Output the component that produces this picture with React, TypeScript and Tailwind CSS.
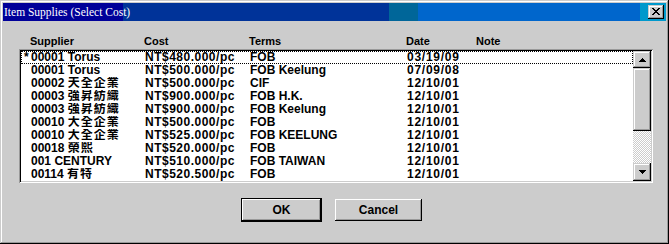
import React from "react";

const raised =
  "shadow-[inset_-1px_-1px_0_#000000,inset_1px_1px_0_#cccccc,inset_-2px_-2px_0_#999999,inset_2px_2px_0_#ffffff]";
const pushBtn =
  "shadow-[inset_-1px_-1px_0_#000000,inset_1px_1px_0_#ffffff,inset_-2px_-2px_0_#999999,inset_2px_2px_0_#cccccc]";

type Row = { mark?: boolean; id: string; name: string; cjk?: boolean; cost: string; terms: string; date: string };

const rows: Row[] = [
  { mark: true, id: "00001", name: "Torus", cost: "NT$480.000/pc", terms: "FOB", date: "03/19/09" },
  { id: "00001", name: "Torus", cost: "NT$500.000/pc", terms: "FOB Keelung", date: "07/09/08" },
  { id: "00002", name: "天全企業", cjk: true, cost: "NT$500.000/pc", terms: "CIF", date: "12/10/01" },
  { id: "00003", name: "強昇紡織", cjk: true, cost: "NT$900.000/pc", terms: "FOB H.K.", date: "12/10/01" },
  { id: "00003", name: "強昇紡織", cjk: true, cost: "NT$900.000/pc", terms: "FOB Keelung", date: "12/10/01" },
  { id: "00010", name: "大全企業", cjk: true, cost: "NT$500.000/pc", terms: "FOB", date: "12/10/01" },
  { id: "00010", name: "大全企業", cjk: true, cost: "NT$525.000/pc", terms: "FOB KEELUNG", date: "12/10/01" },
  { id: "00018", name: "榮熙", cjk: true, cost: "NT$520.000/pc", terms: "FOB", date: "12/10/01" },
  { id: "001", name: "CENTURY", cost: "NT$510.000/pc", terms: "FOB TAIWAN", date: "12/10/01" },
  { id: "00114", name: "有特", cjk: true, cost: "NT$520.500/pc", terms: "FOB", date: "12/10/01" },
];

function ArrowUp() {
  return (
    <svg width="7" height="4" viewBox="0 0 7 4" shapeRendering="crispEdges">
      <rect x="3" y="0" width="1" height="1" fill="#000" />
      <rect x="2" y="1" width="3" height="1" fill="#000" />
      <rect x="1" y="2" width="5" height="1" fill="#000" />
      <rect x="0" y="3" width="7" height="1" fill="#000" />
    </svg>
  );
}

function ArrowDown() {
  return (
    <svg width="7" height="4" viewBox="0 0 7 4" shapeRendering="crispEdges">
      <rect x="0" y="0" width="7" height="1" fill="#000" />
      <rect x="1" y="1" width="5" height="1" fill="#000" />
      <rect x="2" y="2" width="3" height="1" fill="#000" />
      <rect x="3" y="3" width="1" height="1" fill="#000" />
    </svg>
  );
}

function CloseX() {
  const px = [
    "XX....XX",
    ".XX..XX.",
    "..XXXX..",
    "...XX...",
    "..XXXX..",
    ".XX..XX.",
    "XX....XX",
  ];
  return (
    <svg width="8" height="7" viewBox="0 0 8 7" shapeRendering="crispEdges">
      {px.flatMap((r, y) =>
        r.split("").map((c, x) => (c === "X" ? <rect key={`${x}-${y}`} x={x} y={y} width="1" height="1" fill="#000" /> : null))
      )}
    </svg>
  );
}

export default function App() {
  return (
    <div
      className={`w-[669px] h-[244px] bg-[#cccccc] p-[3px] flex flex-col font-['Liberation_Sans','Noto_Sans_CJK_TC',sans-serif] font-bold text-black shadow-[inset_-1px_-1px_0_#000000,inset_1px_1px_0_#cccccc,inset_-2px_-2px_0_#999999,inset_2px_2px_0_#ffffff]`}
    >
      {/* Title bar */}
      <div className="h-[18px] flex items-center justify-between bg-[linear-gradient(to_right,#000099_0px,#000099_120px,#003399_120px,#003399_386px,#006699_386px,#006699_415px,#0066cc_415px,#0066cc_637px,#0099cc_637px)]">
        <span className="pl-[1px] text-white text-[11.5px] font-normal leading-[14px] font-['Liberation_Serif',serif]">
          Item Supplies (Select Cost)
        </span>
        <div className={`mr-[2px] w-[16px] h-[14px] bg-[#cccccc] flex items-center justify-center ${raised}`}>
          <div className="-mt-[1px]">
            <CloseX />
          </div>
        </div>
      </div>

      {/* Column headers */}
      <div className="mt-[14px] ml-[27px] h-[13px] flex text-[11px] leading-[13px]">
        <div className="w-[114px]">Supplier</div>
        <div className="w-[105px]">Cost</div>
        <div className="w-[157px]">Terms</div>
        <div className="w-[70px]">Date</div>
        <div>Note</div>
      </div>

      {/* Listbox */}
      <div className="mt-[1px] ml-[16px] w-[634px] h-[134px] p-[2px] shadow-[inset_1px_1px_0_#999999,inset_-1px_-1px_0_#ffffff,inset_2px_2px_0_#000000,inset_-2px_-2px_0_#cccccc]">
        <div className="w-full h-full bg-white flex">
          <div className="w-[612px] flex flex-col">
            {rows.map((r, i) => (
              <div
                key={i}
                className={`h-[13px] flex items-start text-[12px] leading-[13px] whitespace-nowrap overflow-hidden ${
                  i === 0 ? "outline-1 outline-dotted outline-black -outline-offset-1" : ""
                }`}
              >
                <div className="w-[10px] pl-[3px]">{r.mark ? "*" : ""}</div>
                <div className="w-[114px] flex items-start h-[13px]">
                  <span>{r.id}&nbsp;</span>
                  {r.cjk ? (
                    <span className="inline-block h-[13px] text-[12px] leading-[13px] tracking-[1px]">{r.name}</span>
                  ) : (
                    <span>{r.name}</span>
                  )}
                </div>
                <div className="w-[105px] tracking-[0.5px]">{r.cost}</div>
                <div className="w-[157px]">{r.terms}</div>
                <div className="tracking-[0.75px]">{r.date}</div>
              </div>
            ))}
          </div>
          {/* Scrollbar */}
          <div className="w-[18px] flex flex-col">
            <div className={`h-[17px] bg-[#cccccc] flex items-center justify-center ${raised}`}>
              <ArrowUp />
            </div>
            <div className={`h-[63px] bg-[#cccccc] ${raised}`} />
            <div className="h-[32px] bg-[repeating-conic-gradient(#cccccc_0_25%,#ffffff_0_50%)] bg-[length:2px_2px]" />
            <div className={`h-[18px] bg-[#cccccc] flex items-center justify-center ${raised}`}>
              <ArrowDown />
            </div>
          </div>
        </div>
      </div>

      {/* Buttons */}
      <div className="mt-[15px] ml-[238px] flex items-start">
        <div className="w-[81px] h-[24px] border border-black">
          <div className={`w-full h-full bg-[#cccccc] flex items-center justify-center text-[12px] ${pushBtn}`}>OK</div>
        </div>
        <div
          className={`ml-[13px] mt-[1px] w-[87px] h-[22px] bg-[#cccccc] flex items-center justify-center text-[12px] ${pushBtn}`}
        >
          Cancel
        </div>
      </div>
    </div>
  );
}
